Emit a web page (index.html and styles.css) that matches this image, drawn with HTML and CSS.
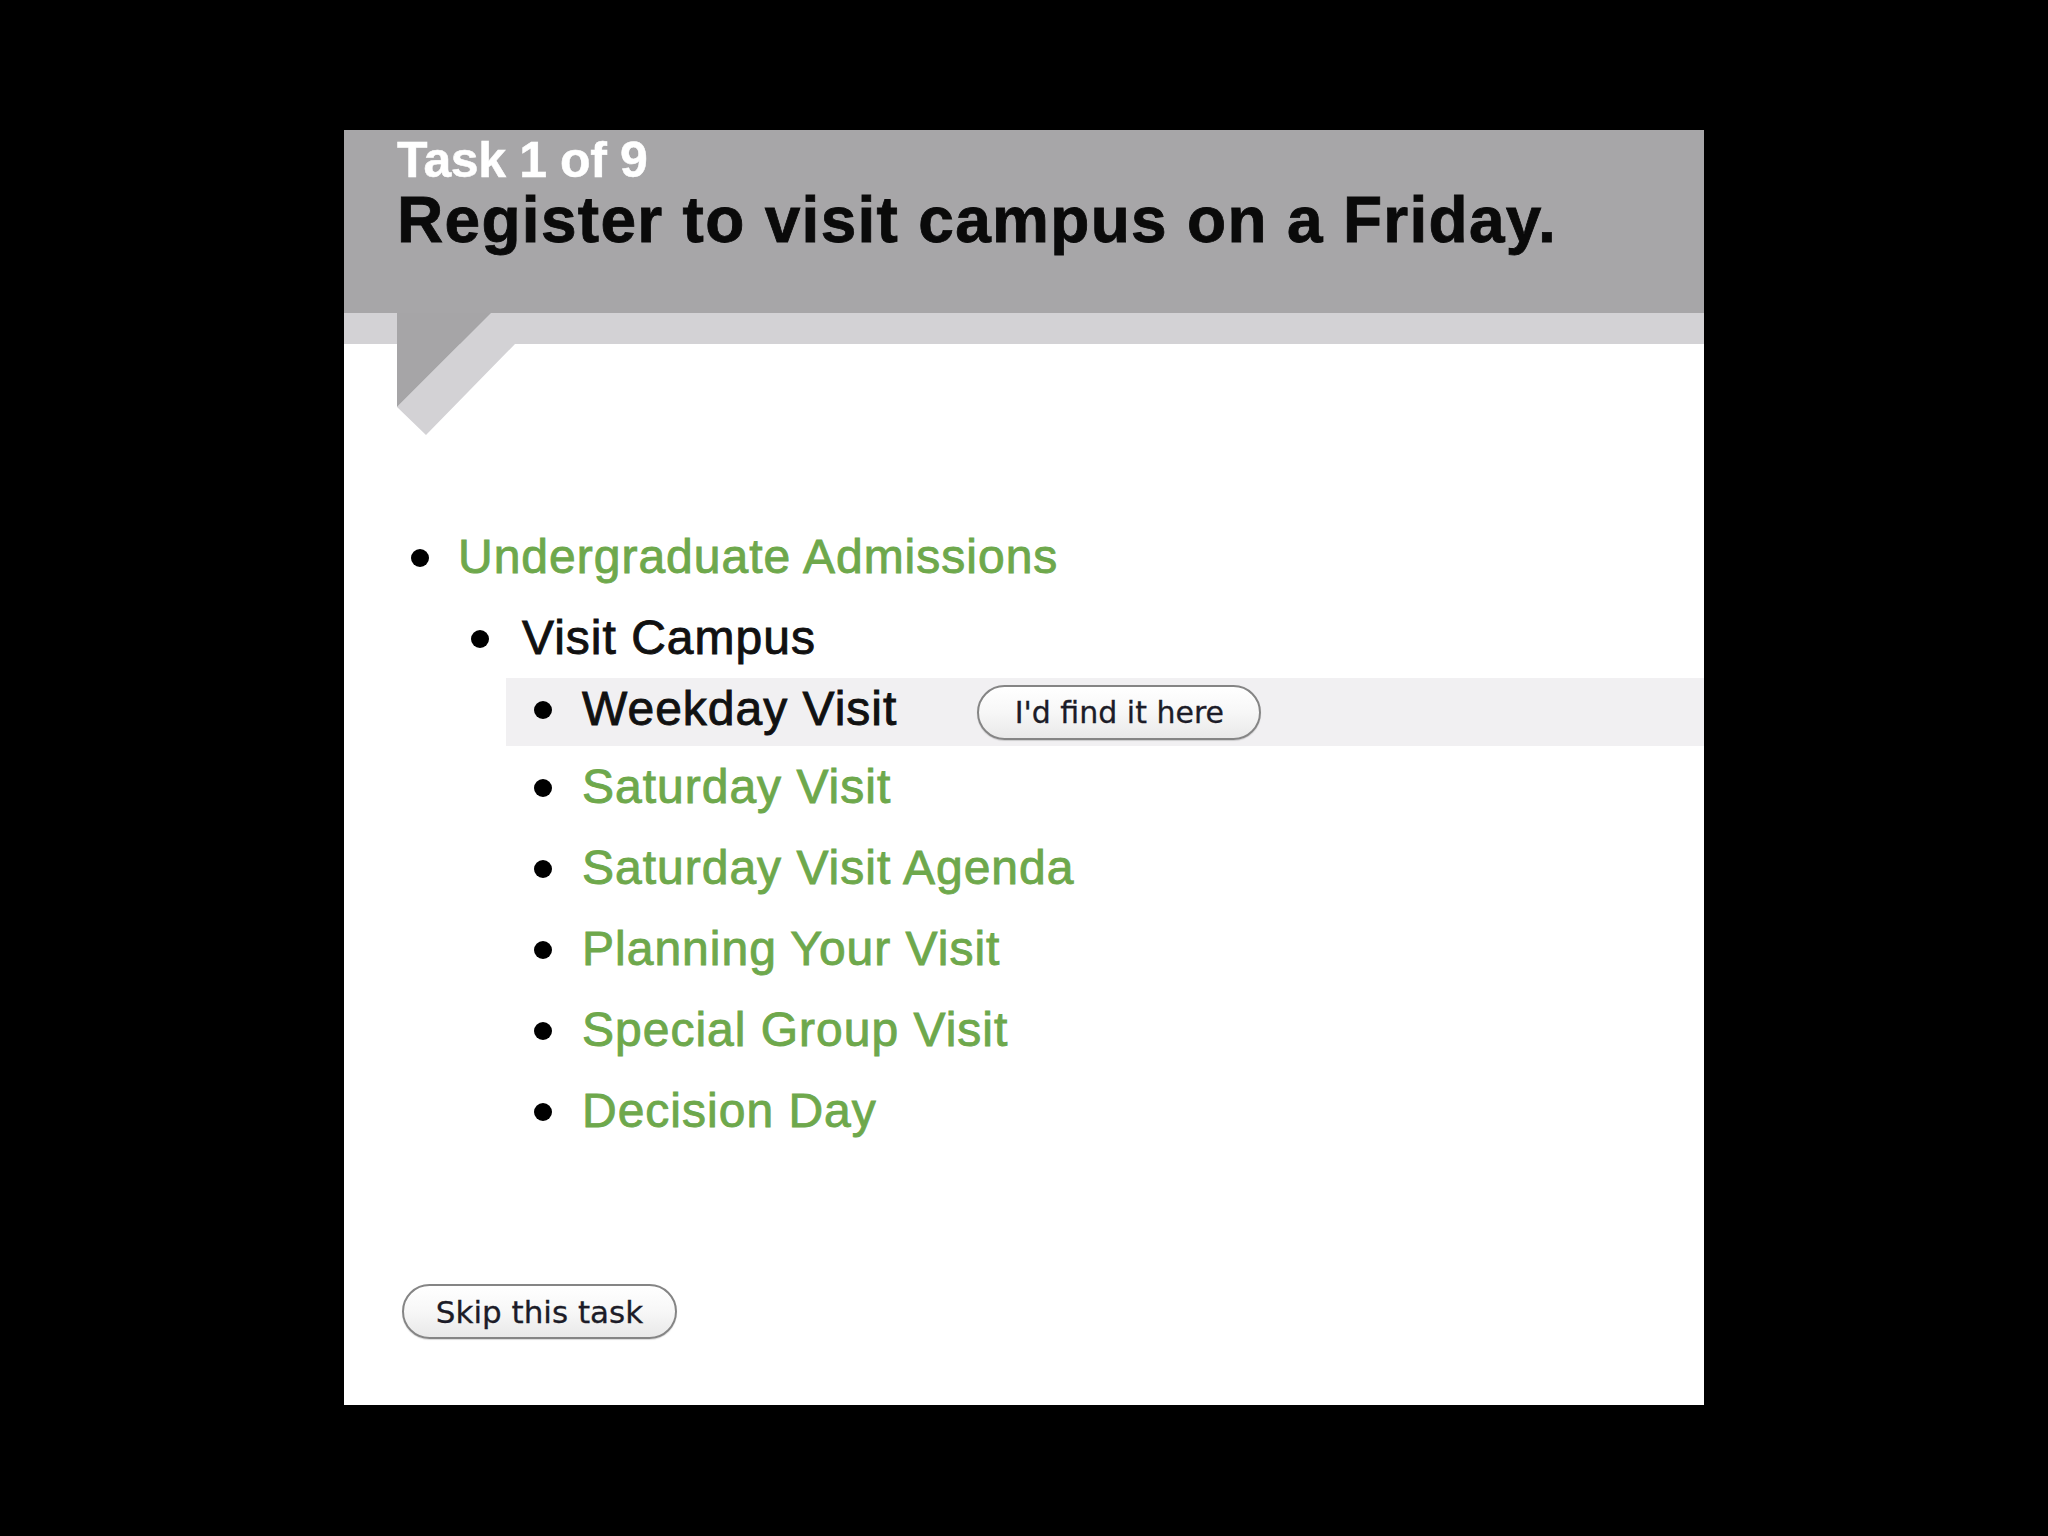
FILE: index.html
```html
<!DOCTYPE html>
<html>
<head>
<meta charset="utf-8">
<title>Task 1 of 9</title>
<link rel="stylesheet" href="styles.css">
</head>
<body>
<div class="panel">
  <header class="task-head">
    <div class="task-count">Task 1 of 9</div>
    <h1 class="task-title">Register to visit campus on a Friday.</h1>
  </header>
  <div class="task-band"></div>
  <svg class="tail" width="140" height="125" viewBox="0 0 140 125">
    <polygon points="0,94 94,0 140,0 140,31 118,31 29,122" fill="#d3d2d5"/>
    <polygon points="0,0 94,0 0,94" fill="#a6a5a7"/>
  </svg>

  <ul class="tree l1">
    <li><span class="item link">Undergraduate Admissions</span>
      <ul class="tree l2">
        <li><span class="item">Visit Campus</span>
          <ul class="tree l3">
            <li class="current">
              <span class="item">Weekday Visit</span>
              <button class="pill find">I'd find it here</button>
            </li>
            <li><span class="item link">Saturday Visit</span></li>
            <li><span class="item link">Saturday Visit Agenda</span></li>
            <li><span class="item link">Planning Your Visit</span></li>
            <li><span class="item link">Special Group Visit</span></li>
            <li><span class="item link">Decision Day</span></li>
          </ul>
        </li>
      </ul>
    </li>
  </ul>

  <button class="pill skip">Skip this task</button>
</div>
</body>
</html>
```

FILE: styles.css
```css
html, body {
  margin: 0;
  padding: 0;
  background: #000;
}

body {
  width: 2048px;
  height: 1536px;
  overflow: hidden;
  font-family: "Liberation Sans", Arial, Helvetica, sans-serif;
}

.panel {
  position: relative;
  margin: 130px 0 0 344px;
  width: 1360px;
  height: 1275px;
  background: #fff;
  overflow: hidden;
}

.task-head {
  height: 183px;
  box-sizing: border-box;
  padding: 5px 0 0 53px;
  background: #a7a6a8;
}

.task-count {
  font-size: 50px;
  line-height: 50px;
  font-weight: bold;
  color: #fff;
  letter-spacing: -0.4px;
  -webkit-text-stroke: 0.5px #fff;
}

.task-title {
  margin: 3px 0 0 0;
  font-size: 64px;
  line-height: 64px;
  font-weight: bold;
  color: #0a0a0a;
  letter-spacing: 1.3px;
  -webkit-text-stroke: 0.8px #0a0a0a;
}

.task-band {
  height: 31px;
  background: #d3d2d5;
}

.tail {
  position: absolute;
  left: 53px;
  top: 183px;
  width: 140px;
  height: 125px;
}

.tree {
  list-style: none;
  margin: 0;
  padding: 0;
}

.l1 {
  margin-top: 172px;
  padding-left: 67px;
}

.l2 {
  padding-left: 60px;
}

.l3 {
  margin-left: 35px;
}

.tree li {
  font-family: "Liberation Sans", Arial, Helvetica, sans-serif;
  font-size: 48px;
  line-height: 81px;
  letter-spacing: 1px;
  color: #111;
}

.item {
  -webkit-text-stroke: 0.9px currentColor;
}

.l3 > li {
  padding-left: 28px;
}

.item::before {
  content: "";
  display: inline-block;
  width: 18px;
  height: 18px;
  border-radius: 50%;
  background: #000;
  margin-right: 29px;
  vertical-align: 6px;
}

.l2 .item::before {
  margin-right: 33px;
}

.l3 .item::before {
  margin-right: 30px;
}

.link {
  color: #6ea84c;
}

.l3 > li.current {
  display: flex;
  align-items: center;
  height: 68px;
  background: #f1f0f2;
}

.current .item {
  line-height: 62px;
  margin-bottom: 6px;
}

.pill {
  box-sizing: border-box;
  height: 55px;
  border: 2px solid #858585;
  border-radius: 28px;
  background: linear-gradient(#ffffff, #f7f7f7 50%, #e9e9e9);
  box-shadow: inset 0 1px 0 #fff, 0 1px 1px rgba(0,0,0,0.15);
  font-family: "DejaVu Sans", "Lucida Grande", sans-serif;
  font-size: 30px;
  color: #1c1c28;
  padding: 0;
  letter-spacing: 0;
  -webkit-text-stroke: 0.3px #1c1c28;
}

.find {
  width: 284px;
  margin-left: 80px;
}

.skip {
  display: block;
  width: 275px;
  margin: 133px 0 0 58px;
  font-size: 31px;
}
```
